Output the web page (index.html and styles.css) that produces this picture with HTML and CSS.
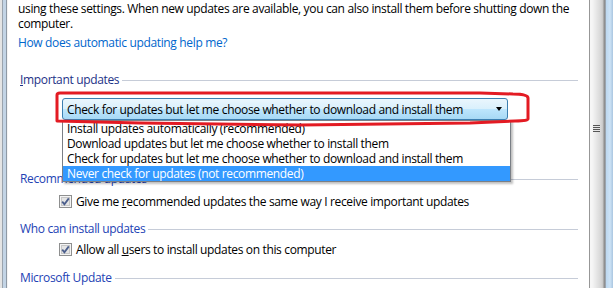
FILE: index.html
```html
<!DOCTYPE html>
<html lang="en">
<head>
    <meta charset="UTF-8">
    <title>Windows Update settings</title>
    <link rel="stylesheet" href="styles.css">
</head>
<body>
    <div class="window">
        <div class="frame-left"></div>

        <div class="content">
            <p class="intro">using these settings. When new updates are available, you can also install them before shutting down the<br>computer.</p>
            <a class="help-link" href="#">How does automatic updating help me?</a>

            <div class="group-title important"><span><u>I</u>mportant updates</span></div>
            <div class="combo-wrap">
                <div class="combo">
                    <span>Check for updates but let me choose whether to download and install them</span>
                    <span class="arrow"></span>
                </div>
                <ul class="combo-list">
                    <li>Install updates automatically (recommended)</li>
                    <li>Download updates but let me choose whether to install them</li>
                    <li>Check for updates but let me choose whether to download and install them</li>
                    <li class="selected">Never check for updates (not recommended)</li>
                </ul>
                <!-- red marker drawn round the box -->
                <svg class="marker" width="476" height="36" viewBox="0 0 476 36">
                    <path d="M1,30 L1,4 Q1,2 4,2 L424,2 L457,3 Q472,3 472,7 L472,28 Q472,30 459,30 L414,32 L244,34 L84,32 Z"
                          fill="none" stroke="#e31b23" stroke-width="3" stroke-linejoin="round"/>
                </svg>
            </div>

            <div class="group-title recommended"><span>Recommended updates</span></div>
            <label class="check-row first">
                <svg class="checkbox" width="13" height="13" viewBox="0 0 13 13">
                    <rect x="0.5" y="0.5" width="12" height="12" fill="#f4f4f4" stroke="#8e8f8f"/>
                    <rect x="2.5" y="2.5" width="8" height="8" fill="#e4e4e4" stroke="#c6c6c6"/>
                    <path d="M3.2,6.6 L5.4,9.2 L9.8,3.4" fill="none" stroke="#4b5e8c" stroke-width="1.8"/>
                </svg>
                <span>Give me <u>r</u>ecommended updates the same way I receive important updates</span>
            </label>

            <div class="group-title"><span>Who can install updates</span></div>
            <label class="check-row">
                <svg class="checkbox" width="13" height="13" viewBox="0 0 13 13">
                    <rect x="0.5" y="0.5" width="12" height="12" fill="#f4f4f4" stroke="#8e8f8f"/>
                    <rect x="2.5" y="2.5" width="8" height="8" fill="#e4e4e4" stroke="#c6c6c6"/>
                    <path d="M3.2,6.6 L5.4,9.2 L9.8,3.4" fill="none" stroke="#4b5e8c" stroke-width="1.8"/>
                </svg>
                <span>Allow all <u>u</u>sers to install updates on this computer</span>
            </label>

            <div class="group-title last"><span>Microsoft Update</span></div>
        </div>

        <div class="scrollbar">
            <div class="grip"></div>
        </div>
        <div class="frame-right"></div>
    </div>
</body>
</html>
```

FILE: styles.css
```css
body {
    margin: 0;
    background: #fff;
    overflow: hidden;
}

.window {
    display: flex;
    height: 288px;
    overflow: hidden;
}

.frame-left {
    width: 8px;
    flex-shrink: 0;
    background: linear-gradient(to right, #e4e4e4 0 2px, #9aa3ad 2px 3px, #c3d4e5 3px 6px, #8e99a5 6px 7px, #f4f4f4 7px);
}

.content {
    flex: 1;
    padding: 0 11px 0 10px;
    font-family: "Open Sans", "Noto Sans", sans-serif;
    font-size: 12px;
    letter-spacing: -0.35px;
    color: #000;
}

.intro {
    margin: 1px 0 0;
    line-height: 15px;
    white-space: nowrap;
}

.help-link {
    display: block;
    margin-top: 4px;
    line-height: 15px;
    color: #0066cc;
    text-decoration: none;
}

.group-title {
    display: flex;
    align-items: center;
    margin: 10px 0 0 2px;
    line-height: 18px;
    color: #2342b4;
    white-space: nowrap;
}

.group-title::after {
    content: "";
    flex: 1;
    height: 1px;
    margin-left: 3px;
    background: #c6ccd8;
}

.group-title.important {
    margin-top: 21px;
    color: #1e3287;
}

.group-title.recommended {
    margin-top: 50px;
}

.group-title.last {
    margin-top: 11px;
}

.combo-wrap {
    position: relative;
    width: 446px;
    margin: 9px 0 0 44px;
}

.combo {
    display: flex;
    align-items: center;
    justify-content: space-between;
    box-sizing: border-box;
    height: 22px;
    padding: 0 4px 0 4px;
    border: 1px solid #3c7fb1;
    border-radius: 3px;
    background: linear-gradient(#eaf6fd 0%, #d9f0fc 50%, #bee6fd 50%, #a7d9f5 100%);
    white-space: nowrap;
}

.arrow {
    width: 0;
    height: 0;
    margin-right: 1px;
    border-left: 3.5px solid transparent;
    border-right: 3.5px solid transparent;
    border-top: 4px solid #000;
}

.combo-list {
    position: absolute;
    top: 22px;
    left: 0;
    z-index: 2;
    width: 447px;
    margin: 0;
    padding: 0;
    list-style: none;
    background: #fff;
    border: 1px solid #7a7f86;
    box-shadow: 2px 2px 2px rgba(0, 0, 0, 0.25);
}

.combo-list li {
    height: 15px;
    padding-left: 4px;
    line-height: 15px;
    white-space: nowrap;
}

.combo-list li.selected {
    background: #3399ff;
    color: #fff;
}

.marker {
    position: absolute;
    left: -6px;
    top: -7px;
    z-index: 3;
    overflow: visible;
}

.check-row {
    display: flex;
    align-items: center;
    gap: 4px;
    height: 18px;
    margin: 2px 0 0 41px;
    white-space: nowrap;
}

.check-row.first {
    margin-top: 4px;
}

.checkbox {
    flex-shrink: 0;
}

.scrollbar {
    width: 16px;
    flex-shrink: 0;
    background: linear-gradient(to right, #979797 0 1px, #f6f6f6 1px 3px, #e8e8e8 7px, #d6d6d6 12px, #c6c6c6 14px, #8f8f8f 15px);
}

.grip {
    width: 7px;
    height: 7px;
    margin: 125px 0 0 4px;
    background: repeating-linear-gradient(#555 0 1px, #e6e6e6 1px 2px);
}

.frame-right {
    width: 8px;
    flex-shrink: 0;
    background: linear-gradient(to right, #9aa4ae 0 1px, #bcd7ef 1px, #cde3f6 5px, #aac6e0 8px);
}
```
